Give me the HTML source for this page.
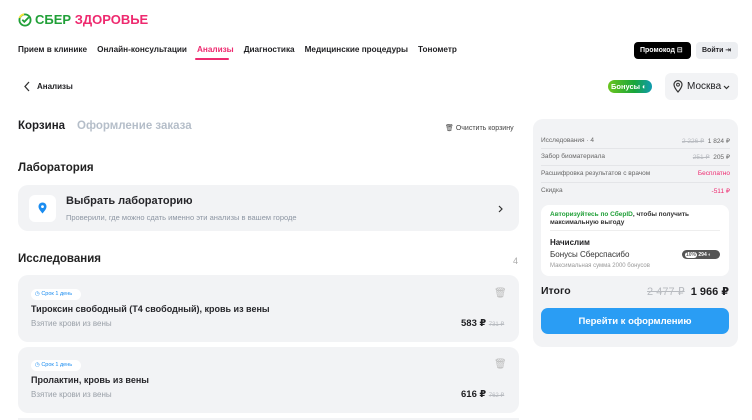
<!DOCTYPE html>
<html><head><meta charset="utf-8"><style>
*{margin:0;padding:0;box-sizing:border-box}
html,body{width:752px;height:420px;overflow:hidden}
body{background:#fff;font-family:"Liberation Sans","DejaVu Sans",sans-serif;color:#1f1f22;position:relative}
.a{position:absolute;white-space:nowrap}
.card{position:absolute;background:#f2f3f5;border-radius:10px}
.s{text-decoration:line-through;color:#b8bbc0}
.r{height:17px;padding-top:4px;border-bottom:1px solid #e4e5e8;display:flex;justify-content:space-between}
</style></head><body>
<svg class="a" style="left:18px;top:13px" width="14" height="14" viewBox="0 0 14 14"><circle cx="7" cy="7" r="5.6" fill="none" stroke="#21a038" stroke-width="1.8"/><path d="M4.3 6.8l2 2 4.5-4.6" fill="none" stroke="#21a038" stroke-width="1.8"/><path d="M1.5 5A6 6 0 0 1 6 1.3" stroke="#f5e43a" stroke-width="1.8" fill="none"/></svg>
<div class="a" style="left:35px;top:12px;font-size:13px;font-weight:bold;color:#21a038">СБЕР <span style="color:#ee2a6f">ЗДОРОВЬЕ</span></div>
<div class="a" style="left:18px;top:45px;font-size:8.2px;font-weight:bold;color:#1f1f22">
<span>Прием в клинике</span><span style="margin-left:10px">Онлайн-консультации</span><span style="margin-left:10px;color:#ee2a6f">Анализы</span><span style="margin-left:10px">Диагностика</span><span style="margin-left:10px">Медицинские процедуры</span><span style="margin-left:10px">Тонометр</span></div>
<div class="a" style="left:195px;top:58px;width:34px;height:2px;background:#ee2a6f;border-radius:1px"></div>
<div class="a" style="left:634px;top:42px;width:57px;height:17px;background:#000;border-radius:4px;color:#fff;font-size:7px;font-weight:bold;padding:4px 0 0 6px">Промокод ⊟</div>
<div class="a" style="left:696px;top:42px;width:42px;height:17px;background:#eceef1;border-radius:4px;font-size:7px;font-weight:bold;padding:4px 0 0 6px">Войти ⇥</div>
<svg class="a" style="left:23px;top:81px" width="8" height="11"><path d="M6 1L2 5.5 6 10" fill="none" stroke="#333" stroke-width="1.3"/></svg>
<div class="a" style="left:37px;top:82px;font-size:8px;font-weight:bold">Анализы</div>
<div class="a" style="left:608px;top:80px;width:44px;height:13px;border-radius:7px;background:linear-gradient(90deg,#6bc51e,#18a53a 60%,#109bb0);color:#fff;font-size:7.5px;font-weight:bold;padding:2px 0 0 3px">Бонусы ◐</div>
<div class="a" style="left:665px;top:73px;width:73px;height:27px;background:#f2f3f5;border-radius:6px"></div>
<svg class="a" style="left:673px;top:80px" width="10" height="13"><path d="M5 12C2 8.5 1 6.5 1 4.6a4 4 0 0 1 8 0C9 6.5 8 8.5 5 12z" fill="none" stroke="#333" stroke-width="1.2"/><circle cx="5" cy="4.7" r="1.4" fill="none" stroke="#333" stroke-width="1"/></svg>
<div class="a" style="left:687px;top:81px;font-size:10px">Москва</div>
<svg class="a" style="left:723px;top:85px" width="7" height="5"><path d="M1 1l2.5 2.5L6 1" fill="none" stroke="#333" stroke-width="1.2"/></svg>
<div class="a" style="left:18px;top:120px;font-size:11.5px;font-weight:bold">Корзина</div>
<div class="a" style="left:77px;top:120px;font-size:11.5px;font-weight:bold;color:#b5bec9">Оформление заказа</div>
<div class="a" style="left:445px;top:124px;font-size:7px;color:#444">🗑︎ Очистить корзину</div>
<div class="a" style="left:18px;top:162px;font-size:11.5px;font-weight:bold;color:#222">Лаборатория</div>
<div class="card" style="left:18px;top:185px;width:501px;height:46px">
 <div class="a" style="left:11px;top:10px;width:27px;height:27px;background:#fff;border-radius:6px"></div>
 <svg class="a" style="left:20px;top:17px" width="9" height="12"><path d="M4.5 11.5C1.5 8 .5 6.3.5 4.5a4 4 0 0 1 8 0c0 1.8-1 3.5-4 7z" fill="#1a8cf0"/><circle cx="4.5" cy="4.6" r="1.4" fill="#fff"/></svg>
 <div class="a" style="left:48px;top:10px;font-size:11px;font-weight:bold;color:#26262a">Выбрать лабораторию</div>
 <div class="a" style="left:48px;top:28px;font-size:7.5px;color:#8d96a3">Проверили, где можно сдать именно эти анализы в вашем городе</div>
 <svg class="a" style="left:480px;top:20px" width="6" height="8"><path d="M1 1l3 3-3 3" fill="none" stroke="#333" stroke-width="1.2"/></svg>
</div>
<div class="a" style="left:18px;top:253px;font-size:11.5px;font-weight:bold;color:#222">Исследования</div>
<div class="a" style="left:513px;top:256px;font-size:9px;color:#aaa">4</div>
<div class="card" style="left:18px;top:275px;width:501px;height:67px">
 <div class="a" style="left:13px;top:14px;width:50px;height:11px;background:#fff;border-radius:6px;font-size:5.5px;color:#1a8cf0;padding:2px 0 0 4px">◷ Срок 1 день</div>
 <div class="a" style="left:13px;top:29px;font-size:9px;font-weight:bold;color:#26262a">Тироксин свободный (T4 свободный), кровь из вены</div>
 <div class="a" style="left:13px;top:44px;font-size:8px;color:#9aa0a8">Взятие крови из вены</div>
 <div class="a" style="left:476px;top:13px;font-size:10px;color:#bbb">🗑︎</div>
 <div class="a" style="left:443px;top:43px;font-size:9.5px;font-weight:bold">583 ₽ <span class="s" style="font-size:6px;font-weight:normal">731 ₽</span></div>
</div>
<div class="card" style="left:18px;top:347px;width:501px;height:66px">
 <div class="a" style="left:13px;top:13px;width:50px;height:11px;background:#fff;border-radius:6px;font-size:5.5px;color:#1a8cf0;padding:2px 0 0 4px">◷ Срок 1 день</div>
 <div class="a" style="left:13px;top:28px;font-size:9px;font-weight:bold;color:#26262a">Пролактин, кровь из вены</div>
 <div class="a" style="left:13px;top:43px;font-size:8px;color:#9aa0a8">Взятие крови из вены</div>
 <div class="a" style="left:476px;top:12px;font-size:10px;color:#bbb">🗑︎</div>
 <div class="a" style="left:443px;top:42px;font-size:9.5px;font-weight:bold">616 ₽ <span class="s" style="font-size:6px;font-weight:normal">762 ₽</span></div>
</div>
<div class="card" style="left:18px;top:418px;width:501px;height:2px;border-radius:0"></div>
<div class="card" style="left:533px;top:119px;width:205px;height:228px">
 <div style="position:absolute;left:8px;right:8px;top:14px;font-size:6.5px;color:#666">
  <div class="r" style="height:16px">Исследования · 4<span><span class="s">2 226 ₽</span>&nbsp; 1 824 ₽</span></div>
  <div class="r" style="height:17px">Забор биоматериала<span><span class="s">251 ₽</span>&nbsp; 205 ₽</span></div>
  <div class="r" style="height:17px">Расшифровка результатов с врачом<span style="color:#ee2a6f">Бесплатно</span></div>
  <div class="r" style="border:0">Скидка<span style="color:#ee2a6f">-511 ₽</span></div>
 </div>
 <div class="a" style="left:8px;top:86px;width:188px;height:71px;background:#fff;border-radius:8px">
  <div class="a" style="left:9px;top:6px;font-size:6.5px;line-height:8px;font-weight:bold;color:#333"><span style="color:#21a038">Авторизуйтесь по СберID</span>, чтобы получить<br>максимальную выгоду</div>
  <div class="a" style="left:9px;top:25px;width:170px;height:1px;background:#eee"></div>
  <div class="a" style="left:9px;top:33px;font-size:8px;font-weight:bold">Начислим</div>
  <div class="a" style="left:9px;top:45px;font-size:8px;color:#333">Бонусы Сберспасибо</div>
  <div class="a" style="left:141px;top:45px;width:38px;height:9px;background:#555;border-radius:5px;font-size:5px;color:#fff;font-weight:bold;padding:1.5px 0 0 3px"><span style="background:#fff;color:#666;border-radius:3px;padding:0 1px">10%</span> 294 ◐</div>
  <div class="a" style="left:9px;top:58px;font-size:6px;color:#999">Максимальная сумма 2000 бонусов</div>
 </div>
 <div class="a" style="left:8px;top:166px;font-size:10.5px;font-weight:bold">Итого</div>
 <div class="a" style="right:9px;top:166px;font-size:11px;font-weight:bold"><span class="s" style="font-weight:normal">2 477 ₽</span>&nbsp;&nbsp;1 966 ₽</div>
 <div class="a" style="left:8px;top:189px;width:188px;height:26px;background:#2a9df4;border-radius:7px;color:#fff;font-size:9.5px;font-weight:bold;text-align:center;padding-top:8px">Перейти к оформлению</div>
</div>
</body></html>
